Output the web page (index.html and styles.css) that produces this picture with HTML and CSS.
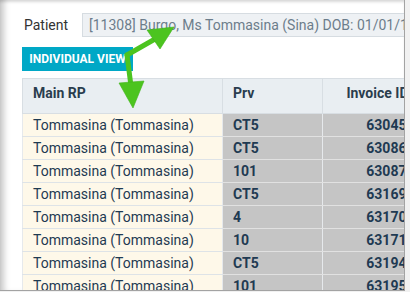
FILE: index.html
```html
<!DOCTYPE html>
<html lang="en">
<head>
  <meta charset="UTF-8" />
  <meta name="viewport" content="width=device-width, initial-scale=1.0" />
  <title>Invoices</title>
  <link rel="stylesheet" href="styles.css">
</head>
<body>
  <div class="window">
    <div class="content">
      <div class="patient-row">
        <label class="patient-label">Patient</label>
        <div class="patient-box">[11308] Burgo, Ms Tommasina (Sina) DOB: 01/01/1958</div>
      </div>

      <button class="view-btn">INDIVIDUAL VIEW</button>

      <table class="grid">
        <thead>
          <tr>
            <th class="col-rp">Main RP</th>
            <th class="col-prv">Prv</th>
            <th class="col-inv">Invoice ID</th>
          </tr>
        </thead>
        <tbody>
          <tr><td class="col-rp">Tommasina (Tommasina)</td><td class="col-prv">CT5</td><td class="col-inv">630451</td></tr>
          <tr><td class="col-rp">Tommasina (Tommasina)</td><td class="col-prv">CT5</td><td class="col-inv">630862</td></tr>
          <tr><td class="col-rp">Tommasina (Tommasina)</td><td class="col-prv">101</td><td class="col-inv">630873</td></tr>
          <tr><td class="col-rp">Tommasina (Tommasina)</td><td class="col-prv">CT5</td><td class="col-inv">631694</td></tr>
          <tr><td class="col-rp">Tommasina (Tommasina)</td><td class="col-prv">4</td><td class="col-inv">631705</td></tr>
          <tr><td class="col-rp">Tommasina (Tommasina)</td><td class="col-prv">10</td><td class="col-inv">631716</td></tr>
          <tr><td class="col-rp">Tommasina (Tommasina)</td><td class="col-prv">CT5</td><td class="col-inv">631947</td></tr>
          <tr><td class="col-rp">Tommasina (Tommasina)</td><td class="col-prv">101</td><td class="col-inv">631958</td></tr>
        </tbody>
      </table>
    </div>

    <!-- annotation arrows drawn over the screenshot -->
    <svg class="arrows" width="410" height="292" viewBox="0 0 410 292">
      <g fill="#4cc41f" stroke="#3fb319" stroke-width="0.6" stroke-linejoin="round">
        <line x1="127" y1="55" x2="155" y2="39" stroke="#4cc41f" stroke-width="5" stroke-linecap="round" />
        <polygon points="147,30 174,27 160,49" />
        <line x1="127" y1="55" x2="131" y2="86" stroke="#4cc41f" stroke-width="5" stroke-linecap="round" />
        <polygon points="119,83 144,81 133,108" />
      </g>
    </svg>
  </div>
</body>
</html>
```

FILE: styles.css
```css
* {
  box-sizing: border-box;
}

body {
  margin: 0;
  background: #f1f1f1;
  font-family: Roboto, "Liberation Sans", sans-serif;
}

.window {
  position: relative;
  width: 405px;
  height: 291px;
  background: #fff;
  border-right: 1px solid #a3a3a3;
  border-bottom: 1px solid #a3a3a3;
  overflow: hidden;
  box-shadow: inset 8px 0 6px -4px rgba(0, 0, 0, 0.22), inset 0 3px 3px -1px rgba(0, 0, 0, 0.14);
}

.content {
  padding: 13px 0 0 22px;
  width: 470px;
}

.patient-row {
  display: flex;
  align-items: center;
  height: 24px;
}

.patient-label {
  width: 60px;
  padding-left: 2px;
  font-size: 14px;
  color: #333;
}

.patient-box {
  flex: 1;
  height: 24px;
  line-height: 22px;
  padding-left: 6px;
  background: #eef1f4;
  border: 1px solid #d6dce1;
  font-size: 14px;
  color: #6c7d8b;
  white-space: nowrap;
}

.view-btn {
  display: block;
  margin-top: 10px;
  height: 24px;
  width: 111px;
  padding: 0;
  background: #00a8c6;
  color: #fff;
  border: none;
  font-family: inherit;
  font-weight: bold;
  font-size: 12px;
  text-align: center;
}

.grid {
  margin-top: 7px;
  border-collapse: collapse;
  table-layout: fixed;
  width: 402px;
}

.grid th {
  height: 35px;
  background: #e9eef2;
  border-top: 1px solid #d8dee3;
  border-bottom: 1px solid #d8dee3;
  border-left: 1px solid #d8dee3;
  font-size: 14px;
  font-weight: bold;
  color: #2a3d4e;
  text-align: left;
  padding: 0 10px 6px;
}

.grid td {
  height: 23px;
  padding: 0 10px;
  border-bottom: 1px solid #dee3e7;
  border-left: 1px solid #e6e9ec;
  font-size: 14px;
  color: #1f3a52;
  white-space: nowrap;
}

.col-rp {
  width: 200px;
}

.col-prv {
  width: 100px;
}

.grid td.col-rp {
  background: #fef8e9;
}

.grid td.col-prv,
.grid td.col-inv {
  background: #c5c5c5;
  font-weight: bold;
  border-bottom-color: #e1e1e1;
}

.grid .col-inv {
  width: 102px;
  text-align: right;
}

.grid th.col-inv {
  padding-right: 16px;
}

.arrows {
  position: absolute;
  left: 0;
  top: 0;
}
```
